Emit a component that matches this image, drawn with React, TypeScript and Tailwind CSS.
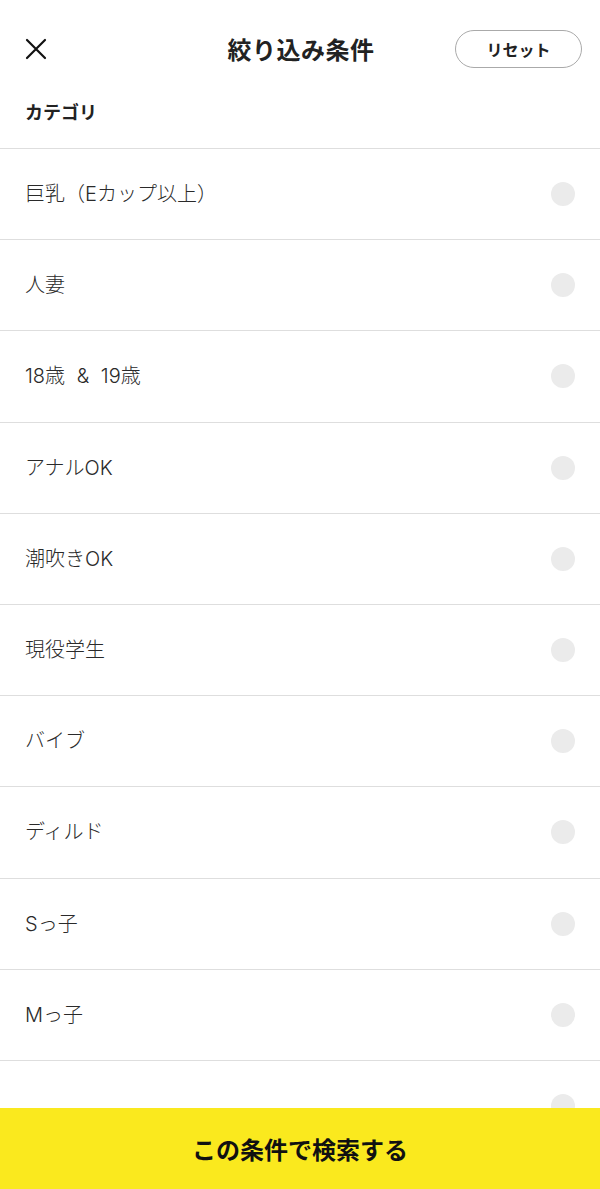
const categories = [
  "巨乳（Eカップ以上）",
  "人妻",
  "18歳 & 19歳",
  "アナルOK",
  "潮吹きOK",
  "現役学生",
  "バイブ",
  "ディルド",
  "Sっ子",
  "Mっ子",
  "",
];

function CloseIcon() {
  return (
    <svg width="22" height="22" viewBox="0 0 22 22" fill="none">
      <path d="M2 2L20 20M20 2L2 20" stroke="#111" strokeWidth="2.2" strokeLinecap="round" />
    </svg>
  );
}

export default function App() {
  return (
    <div
      className="flex h-[1189px] w-[600px] flex-col overflow-hidden bg-white text-[#222]"
      style={{ fontFamily: '"Noto Sans CJK JP", "Noto Sans", sans-serif' }}
    >
      <header className="flex h-[38px] shrink-0 items-center justify-between px-[25px] mt-[30px]">
        <button className="flex w-[126px] items-center">
          <CloseIcon />
        </button>
        <h1 className="text-[24px] font-bold leading-none tracking-[0.5px] -ml-[4px]">絞り込み条件</h1>
        <button className="flex h-[38px] w-[127px] items-center justify-center rounded-full border border-[#aaa] text-[16px] font-bold text-[#222] -mr-[7px]">
          リセット
        </button>
      </header>

      <div className="shrink-0 px-[25px] pt-[31px] pb-[25px] text-[18px] font-bold leading-[24px]">カテゴリ</div>

      <ul className="min-h-0 flex-1 overflow-hidden font-['Inter','Noto_Sans_CJK_JP',sans-serif]">
        {categories.map((c, i) => (
          <li
            key={i}
            className="flex h-[91.2px] items-center justify-between border-t border-[#dedede] pl-[25px] pr-[25px]"
          >
            <span className="text-[20px] font-light leading-none text-[#2a2a2a] [word-spacing:6px]">{c}</span>
            <span className="h-[24px] w-[24px] rounded-full bg-[#ebebeb]" />
          </li>
        ))}
      </ul>

      <button className="flex h-[81px] shrink-0 items-center justify-center bg-[#fae91e] text-[24px] font-bold text-[#111]">
        この条件で検索する
      </button>
    </div>
  );
}
